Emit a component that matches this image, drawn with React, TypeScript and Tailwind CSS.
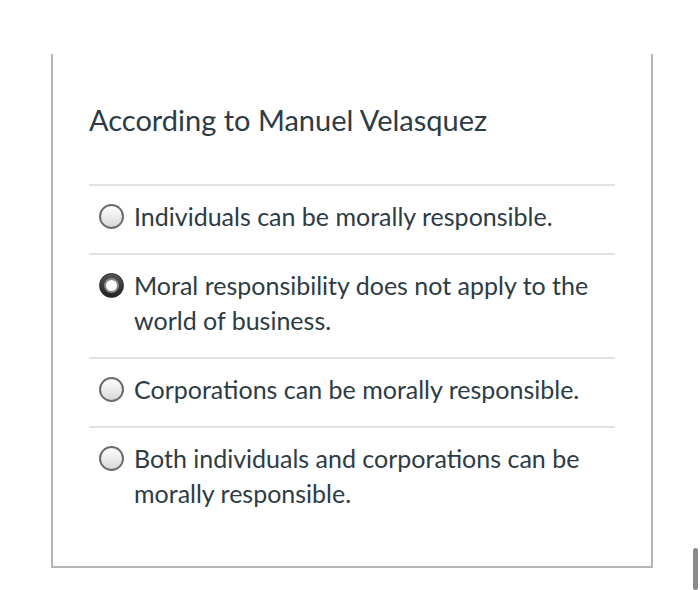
import React from "react";

const options = [
  { id: "a", label: "Individuals can be morally responsible.", checked: false },
  { id: "b", label: "Moral responsibility does not apply to the world of business.", checked: true },
  { id: "c", label: "Corporations can be morally responsible.", checked: false },
  { id: "d", label: "Both individuals and corporations can be morally responsible.", checked: false },
];

function Radio({ checked }: { checked: boolean }) {
  if (checked) {
    return (
      <span className="mt-[5px] flex h-[25px] w-[25px] shrink-0 items-center justify-center rounded-full border border-[#2b2b2b] bg-gradient-to-b from-[#555] to-[#222]">
        <span className="h-[11px] w-[11px] rounded-full bg-white ring-2 ring-[#888]" />
      </span>
    );
  }
  return (
    <span className="mt-[5px] h-[25px] w-[25px] shrink-0 rounded-full border-2 border-[#6b6b6b] bg-gradient-to-b from-white to-[#d8d8d8]" />
  );
}

export default function App() {
  return (
    <main className="h-[590px] w-[700px] bg-white relative overflow-hidden font-['Lato','Liberation_Sans',sans-serif] text-[#2d3b45]">
      <div className="ml-[51px] mt-[54px] h-[514px] w-[602px] border-x-2 border-b-2 border-[#b5b5b5] pl-[36px] pr-[36px]">
        <h1 className="pt-[49px] pb-[47px] text-[29px] leading-[34px] font-normal">
          According to Manuel Velasquez
        </h1>

        <div>
          {options.map((o) => (
            <label
              key={o.id}
              className="flex items-start gap-[10px] border-t-2 border-[#e2e2e2] pl-[10px] pt-[13px] pb-[19px] text-[25px] leading-[35px]"
            >
              <Radio checked={o.checked} />
              <span>{o.label}</span>
            </label>
          ))}
        </div>
      </div>

      {/* scrollbar thumb */}
      <div className="absolute left-[693px] top-[548px] h-[42px] w-[5px] rounded-full bg-[#8a8a8a]" />
    </main>
  );
}
